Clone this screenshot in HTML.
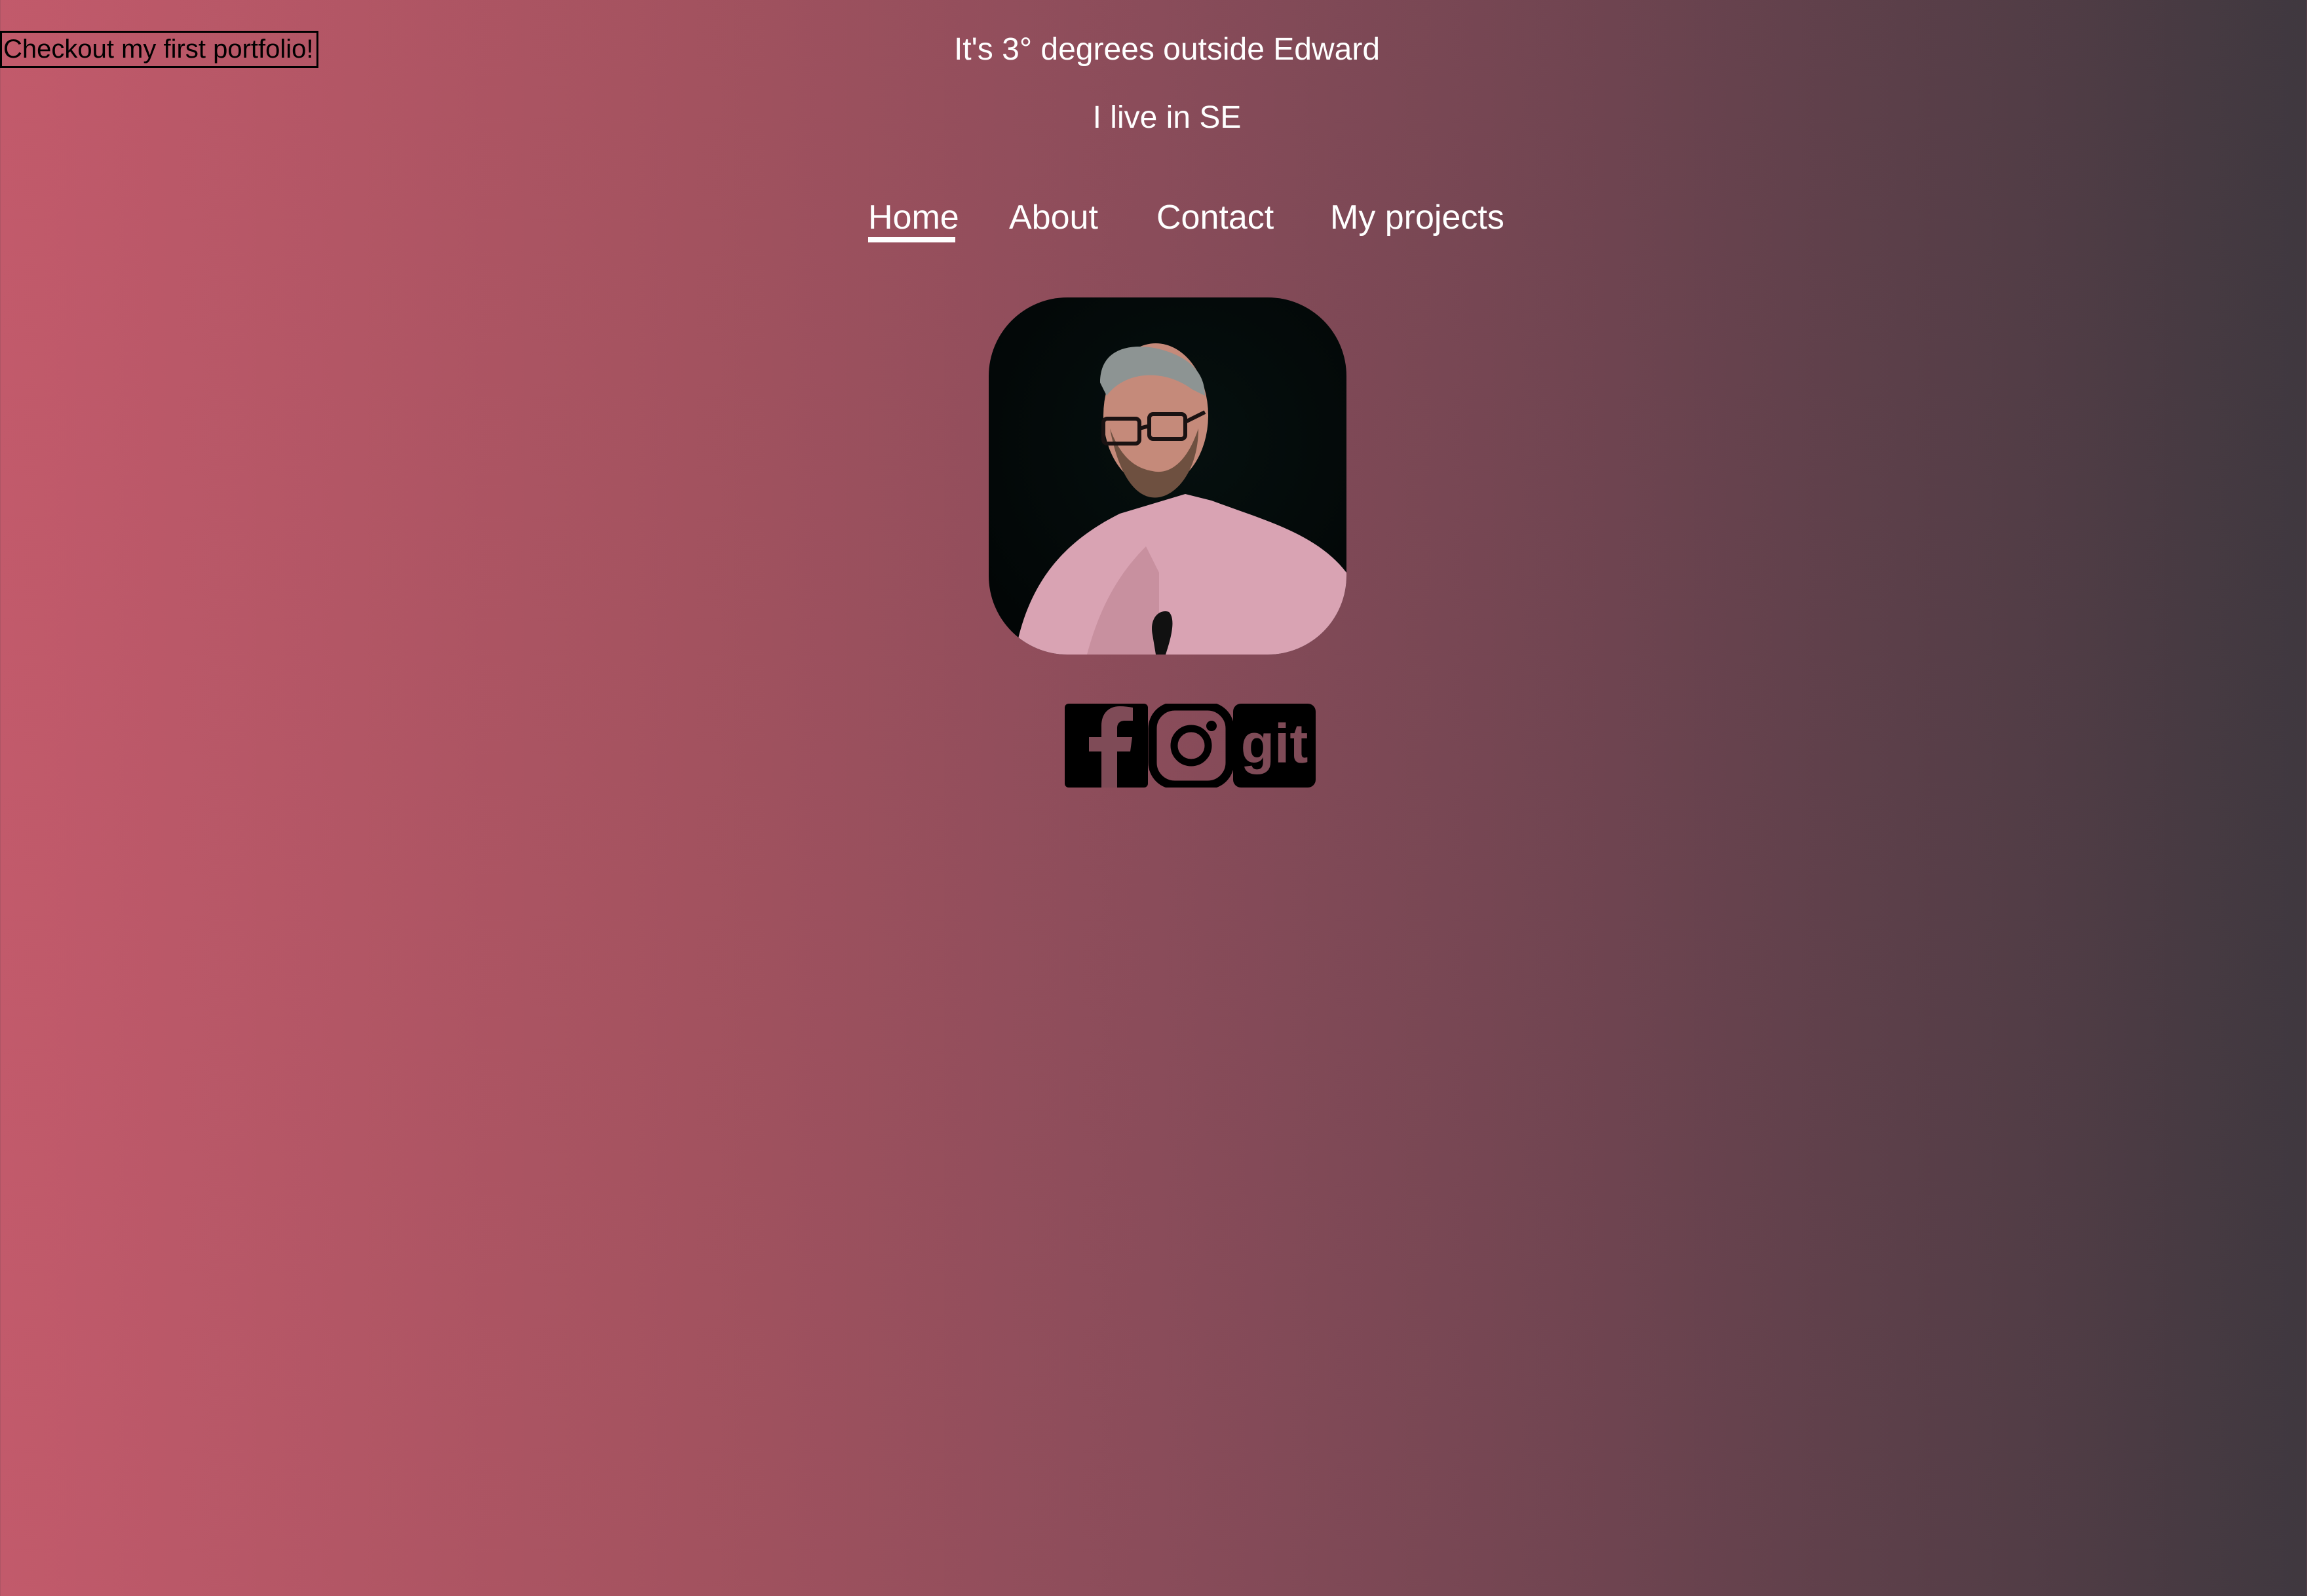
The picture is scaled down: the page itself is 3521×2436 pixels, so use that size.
<!DOCTYPE html>
<html><head><meta charset="utf-8"><style>
html,body{margin:0;padding:0}
body{width:3521px;height:2436px;overflow:hidden;position:relative;background:linear-gradient(to right,#c25a6b 0%,#a3525f 30%,#8a4c5a 50%,#6e4450 70%,#3f383f 100%);font-family:"Comic Sans MS","Liberation Sans",sans-serif;color:#fff}
.t{position:absolute;white-space:nowrap;line-height:1}
#btn{position:absolute;left:0;top:47px;width:478px;height:51px;border:3px solid #000;color:#000;font-size:40px;line-height:51px;box-sizing:content-box;padding-left:2px}
.c{left:0;width:3562px;text-align:center}
.nav{font-size:52px;top:306px}
</style></head><body>
<div id="btn">Checkout my first portfolio!</div>
<div class="t c" style="top:52px;font-size:48px">It's 3° degrees outside Edward</div>
<div class="t c" style="top:156px;font-size:48px">I live in SE</div>
<div class="t nav" style="left:1325px">Home</div>
<div style="position:absolute;left:1325px;top:362px;width:133px;height:8px;background:#fff"></div>
<div class="t nav" style="left:1540px">About</div>
<div class="t nav" style="left:1765px">Contact</div>
<div class="t nav" style="left:2030px">My projects</div>
<svg style="position:absolute;left:1509px;top:454px" width="546" height="545" viewBox="0 0 546 545">
<defs><clipPath id="r"><rect width="546" height="545" rx="120"/></clipPath>
<radialGradient id="bg" cx="0.55" cy="0.4" r="0.7"><stop offset="0" stop-color="#06100f"/><stop offset="1" stop-color="#020606"/></radialGradient></defs>
<g clip-path="url(#r)">
<rect width="546" height="545" fill="url(#bg)"/>
<path d="M40 545 C60 430 120 370 200 330 L300 300 L340 310 C420 340 500 360 546 420 L546 545Z" fill="#d9a3b3"/>
<path d="M150 545 C170 470 200 420 240 380 L260 420 L260 545Z" fill="#c8909f"/>
<ellipse cx="255" cy="180" rx="80" ry="110" fill="#c58a7a"/>
<path d="M170 130 C170 70 230 70 265 80 C300 90 330 110 330 150 L310 140 C270 110 210 110 180 150Z" fill="#8d9493"/>
<path d="M185 200 C200 280 230 310 260 305 C290 300 320 260 320 200 C300 260 270 270 250 265 C220 260 200 240 185 200Z" fill="#6e5040"/>
<rect x="175" y="185" width="55" height="38" rx="6" fill="none" stroke="#1a1212" stroke-width="6"/>
<rect x="245" y="178" width="55" height="38" rx="6" fill="none" stroke="#1a1212" stroke-width="6"/>
<path d="M230 200 L245 196 M300 190 L330 175" stroke="#1a1212" stroke-width="6"/>
<path d="M250 515 C245 490 260 475 275 480 C285 490 280 515 270 545 L255 545Z" fill="#111"/>
</g></svg>
<svg style="position:absolute;left:1625px;top:1074px" width="383" height="128" viewBox="0 0 383 128">
<rect x="0" y="0" width="127" height="128" rx="6" fill="#000"/>
<path d="M80 128 V73 H100 L103 51 H80 V38 C80 31 83 26 92 26 H104 V6 C98 5 91 4 84 4 C67 4 56 15 56 34 V51 H37 V73 H56 V128Z" fill="#7f4b57"/>
<rect x="134" y="4" width="118" height="120" rx="34" fill="none" stroke="#000" stroke-width="13"/>
<circle cx="193" cy="64" r="26" fill="none" stroke="#000" stroke-width="11"/>
<circle cx="224" cy="34" r="8" fill="#000"/>
<rect x="257" y="0" width="126" height="128" rx="12" fill="#000"/>
<text x="320" y="90" text-anchor="middle" font-family="Liberation Sans,sans-serif" font-weight="bold" font-size="84" fill="#7f4b57">git</text>
</svg>
</body></html>
